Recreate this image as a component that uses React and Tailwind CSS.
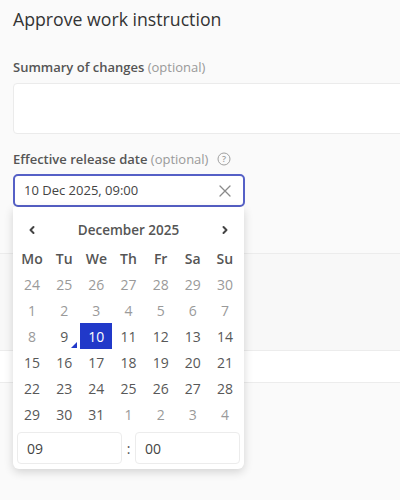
import React from "react";

const weeks = [
  [["24", 0], ["25", 0], ["26", 0], ["27", 0], ["28", 0], ["29", 0], ["30", 0]],
  [["1", 0], ["2", 0], ["3", 0], ["4", 0], ["5", 0], ["6", 0], ["7", 0]],
  [["8", 0], ["9", 2], ["10", 3], ["11", 1], ["12", 1], ["13", 1], ["14", 1]],
  [["15", 1], ["16", 1], ["17", 1], ["18", 1], ["19", 1], ["20", 1], ["21", 1]],
  [["22", 1], ["23", 1], ["24", 1], ["25", 1], ["26", 1], ["27", 1], ["28", 1]],
  [["29", 1], ["30", 1], ["31", 1], ["1", 0], ["2", 0], ["3", 0], ["4", 0]],
];

function Day({ label, kind }) {
  if (kind === 3) {
    return (
      <div className="h-[26px] flex items-center justify-center bg-[#2139c9] text-white">
        {label}
      </div>
    );
  }
  if (kind === 2) {
    return (
      <div className="relative h-[26px] flex items-center justify-center text-[#585858]">
        {label}
        <svg className="absolute right-[3px] bottom-[1px]" width="6" height="6" viewBox="0 0 6 6">
          <polygon points="6,0 6,6 0,6" fill="#2139c9" />
        </svg>
      </div>
    );
  }
  return (
    <div className={"h-[26px] flex items-center justify-center " + (kind === 1 ? "text-[#585858]" : "text-[#9a9a9a]")}>
      {label}
    </div>
  );
}

export default function App() {
  return (
    <div
      className="relative w-[400px] h-[500px] overflow-hidden bg-[#fafafa]"
      style={{ fontFamily: '"Open Sans", "Noto Sans", sans-serif' }}
    >
      <div className="px-[13px] pt-[6px]">
        <h1 className="text-[17.7px] leading-[26px] text-[#333]">Approve work instruction</h1>
        <div className="mt-[26px] text-[13px] leading-[18px] font-semibold text-[#555]">
          Summary of changes <span className="font-normal text-[#999]">(optional)</span>
        </div>
        <div className="mt-[7px] h-[51px] w-[400px] rounded-[4px] border border-[#ebebeb] bg-white" />
        <div className="mt-[16px] flex items-center text-[13px] leading-[18px] font-semibold text-[#555]">
          <span>
            Effective release date <span className="font-normal text-[#999]">(optional)</span>
          </span>
          <svg className="ml-[9px]" width="14" height="14" viewBox="0 0 14 14" fill="none">
            <circle cx="7" cy="7" r="6" stroke="#a0a0a0" strokeWidth="1" />
            <text x="7" y="10.2" textAnchor="middle" fontSize="9" fill="#a0a0a0" fontFamily="Open Sans, sans-serif">?</text>
          </svg>
        </div>
        <div className="mt-[6px] w-[232px] h-[33px] rounded-[5px] border-2 border-[#5560c6] bg-white flex items-center pl-[9px] pr-[12px]">
          <span className="flex-1 text-[13px] text-[#444]">10 Dec 2025, 09:00</span>
          <svg width="12" height="12" viewBox="0 0 12 12" stroke="#8a8a8a" strokeWidth="1.3" strokeLinecap="round">
            <path d="M1 1 L11 11 M11 1 L1 11" />
          </svg>
        </div>
      </div>

      {/* background sections behind the popover */}
      <div className="absolute left-0 right-0 top-[253px] h-[97px] border-t border-[#ececec] bg-[#f8f8f8]" />
      <div className="absolute left-0 right-0 top-[350px] h-[33px] border-y border-[#ececec] bg-white" />

      {/* popover */}
      <div className="absolute left-[13px] top-[207px] w-[231px] h-[262px] bg-white rounded-b-[6px] shadow-[0_3px_10px_rgba(0,0,0,0.16)] px-[3px]">
        <div className="h-[38px] pt-[8px] flex items-center justify-between px-[12px]">
          <svg width="8" height="10" viewBox="0 0 8 10" fill="none" stroke="#444" strokeWidth="2" strokeLinecap="round" strokeLinejoin="round">
            <path d="M5.5 2 L2.5 5 L5.5 8" />
          </svg>
          <span className="text-[13.5px] font-semibold text-[#555]">December 2025</span>
          <svg width="8" height="10" viewBox="0 0 8 10" fill="none" stroke="#444" strokeWidth="2" strokeLinecap="round" strokeLinejoin="round">
            <path d="M2.5 2 L5.5 5 L2.5 8" />
          </svg>
        </div>
        <div className="grid grid-cols-7 text-[14px]">
          {["Mo", "Tu", "We", "Th", "Fr", "Sa", "Su"].map((d) => (
            <div key={d} className="h-[26px] flex items-center justify-center font-semibold text-[#555]">
              {d}
            </div>
          ))}
          {weeks.flat().map(([l, k], i) => (
            <Day key={i} label={l} kind={k} />
          ))}
        </div>
        <div className="mt-[5px] flex items-center px-[1px]">
          <div className="flex-1 h-[32px] rounded-[4px] border border-[#ececec] flex items-center pl-[9px] text-[14px] text-[#444]">09</div>
          <span className="w-[13px] text-center text-[14px] text-[#555]">:</span>
          <div className="flex-1 h-[32px] rounded-[4px] border border-[#ececec] flex items-center pl-[9px] text-[14px] text-[#444]">00</div>
        </div>
      </div>
    </div>
  );
}
